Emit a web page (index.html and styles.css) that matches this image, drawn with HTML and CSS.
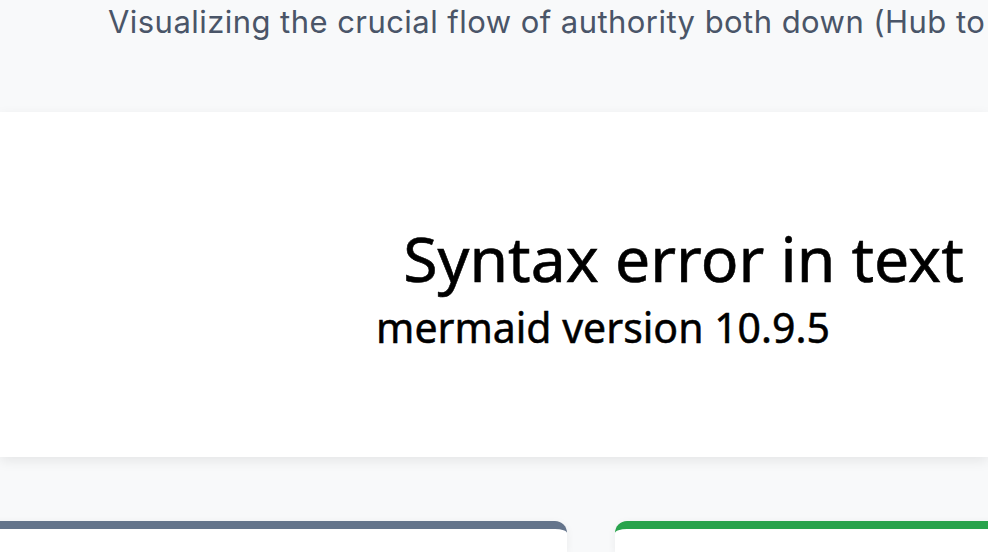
FILE: index.html
```html
<!DOCTYPE html>
<html lang="en">
<head>
<meta charset="utf-8">
<title>Authority Flow</title>
<link rel="stylesheet" href="styles.css">
</head>
<body>
<header class="intro">
  <p class="subtitle">Visualizing the crucial flow of authority both down (Hub to</p>
</header>
<section class="diagram-panel">
  <svg class="mermaid-error" width="988" height="345" viewBox="0 0 988 345" xmlns="http://www.w3.org/2000/svg">
    <text class="error-title" x="683.5" y="170" text-anchor="middle">Syntax error in text</text>
    <text class="error-version" x="603" y="231" text-anchor="middle">mermaid version 10.9.5</text>
  </svg>
</section>
<section class="cards">
  <article class="card card-slate"></article>
  <article class="card card-green"></article>
</section>
</body>
</html>
```
FILE: styles.css
```css
html, body {
  margin: 0;
  padding: 0;
}
body {
  background: #f8f9fa;
  overflow: hidden;
  width: 988px;
  height: 552px;
}
.intro {
  height: 112px;
  padding-left: 108px;
  box-sizing: border-box;
  overflow: hidden;
}
.subtitle {
  margin: 0;
  padding-top: 3px;
  font-family: "Inter", "Liberation Sans", sans-serif;
  font-size: 31px;
  letter-spacing: 0.45px;
  line-height: 1.2;
  color: #4a5568;
  white-space: nowrap;
}
.diagram-panel {
  height: 345px;
  background: #ffffff;
  box-shadow: 0 4px 12px rgba(0, 0, 0, 0.08);
  position: relative;
}
.mermaid-error {
  display: block;
}
.error-title {
  font-family: "Noto Sans", "Open Sans", sans-serif;
  font-size: 62.5px;
  fill: #000;
  stroke: #000;
  stroke-width: 0.6px;
}
.error-version {
  font-family: "Noto Sans", "Open Sans", sans-serif;
  font-size: 41px;
  fill: #000;
  stroke: #000;
  stroke-width: 0.5px;
}
.cards {
  display: grid;
  grid-template-columns: 587px 420px;
  gap: 48px;
  margin-top: 64px;
  margin-left: -20px;
}
.card {
  height: 23px;
  background: #ffffff;
  border-radius: 12px 12px 0 0;
  border-top: 8px solid #64748b;
  box-shadow: 0 2px 8px rgba(0, 0, 0, 0.06);
}
.card-green {
  border-top-color: #28a34c;
}
```
